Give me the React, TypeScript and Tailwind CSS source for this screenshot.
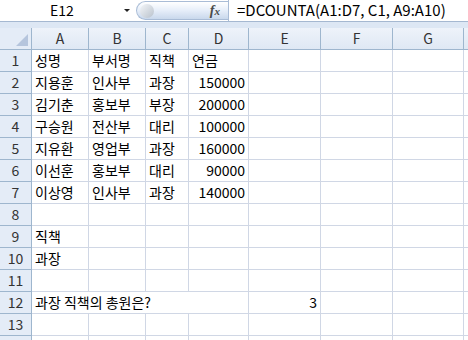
const cols = ['A', 'B', 'C', 'D', 'E', 'F', 'G', '']

type Row = { a?: string; b?: string; c?: string; d?: string; e?: string; wide?: boolean }

const rows: Row[] = [
  { a: '성명', b: '부서명', c: '직책', d: '연금' },
  { a: '지용훈', b: '인사부', c: '과장', d: '150000' },
  { a: '김기춘', b: '홍보부', c: '부장', d: '200000' },
  { a: '구승원', b: '전산부', c: '대리', d: '100000' },
  { a: '지유환', b: '영업부', c: '과장', d: '160000' },
  { a: '이선훈', b: '홍보부', c: '대리', d: '90000' },
  { a: '이상영', b: '인사부', c: '과장', d: '140000' },
  {},
  { a: '직책' },
  { a: '과장' },
  {},
  { a: '과장 직책의 총원은?', e: '3', wide: true },
  {},
  {},
]

const isNum = (s?: string) => !!s && /^\d+$/.test(s)

function Cell({ value, num, span }: { value?: string; num?: boolean; span?: boolean }) {
  return (
    <div
      className={`flex h-[22px] items-center whitespace-nowrap border-b border-r border-[#d0d7e5] bg-white px-[3px] text-[14px] text-black ${
        num ? 'justify-end' : 'justify-start'
      } ${span ? 'col-span-4' : ''}`}
    >
      {value}
    </div>
  )
}

export default function App() {
  return (
    <div
      className="h-[340px] w-[468px] overflow-hidden bg-white"
      style={{ fontFamily: '"Noto Sans CJK KR", "Noto Sans", sans-serif' }}
    >
      {/* formula bar */}
      <div className="flex h-[22px] items-stretch border-b border-[#a5b8d1] bg-white">
        <div className="flex w-[136px] items-center">
          <span className="flex-1 text-center text-[14px] text-black">E12</span>
          <span className="mr-[6px] h-0 w-0 border-x-[3px] border-t-[3px] border-x-transparent border-t-[#222]" />
        </div>
        <div className="my-[1px] flex w-[92px] items-center rounded-l-full border border-r-0 border-[#a9bcd6] bg-gradient-to-b from-[#ffffff] via-[#e6eef9] to-[#c9d8ec] pl-[3px] pr-[8px]">
          <span className="h-[14px] w-[14px] rounded-full bg-gradient-to-br from-[#f4f6f9] to-[#b9c2cc]" />
          <span className="ml-auto font-['Liberation_Serif'] text-[14px] font-bold italic text-[#4a4a4a]">
            f<span className="text-[11px]">x</span>
          </span>
        </div>
        <div className="flex flex-1 items-center border-l border-[#a9bcd6] pl-[8px] text-[15px] text-black">
          =DCOUNTA(A1:D7, C1, A9:A10)
        </div>
      </div>
      <div className="h-[6px] bg-[#dde7f4]" />

      {/* sheet */}
      <div className="grid grid-cols-[32px_57px_57px_43px_60px_72px_72px_71px_1fr]">
        <div className="relative h-[22px] border-b border-r border-[#9eb6ce] bg-[#e4ecf7]">
          <span className="absolute bottom-[3px] right-[3px] h-0 w-0 border-b-[12px] border-l-[12px] border-b-[#b5c5dd] border-l-transparent" />
        </div>
        {cols.map((c, i) => (
          <div
            key={i}
            className="flex h-[22px] items-center justify-center border-b border-r border-[#9eb6ce] bg-gradient-to-b from-[#eef3fa] to-[#dfe8f4] text-[14px] text-[#333]"
          >
            {c}
          </div>
        ))}
        {rows.map((r, i) => (
          <div key={i} className="contents">
            <div className="flex h-[22px] items-center justify-center border-b border-r border-[#9eb6ce] bg-[#e4ecf7] text-[14px] text-[#333]">
              {i < 13 ? i + 1 : ''}
            </div>
            {r.wide ? (
              <Cell value={r.a} span />
            ) : (
              <>
                <Cell value={r.a} />
                <Cell value={r.b} />
                <Cell value={r.c} />
                <Cell value={r.d} num={isNum(r.d)} />
              </>
            )}
            <Cell value={r.e} num={isNum(r.e)} />
            <Cell />
            <Cell />
            <Cell />
          </div>
        ))}
      </div>
    </div>
  )
}
